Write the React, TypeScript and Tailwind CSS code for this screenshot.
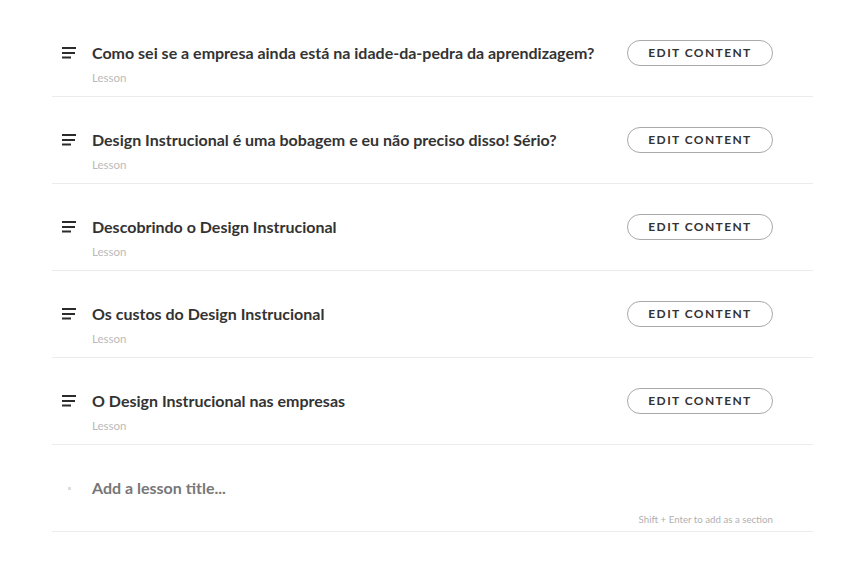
const lessons = [
  'Como sei se a empresa ainda está na idade-da-pedra da aprendizagem?',
  'Design Instrucional é uma bobagem e eu não preciso disso! Sério?',
  'Descobrindo o Design Instrucional',
  'Os custos do Design Instrucional',
  'O Design Instrucional nas empresas',
];

function DragIcon() {
  return (
    <svg width="16" height="12" viewBox="0 0 16 12" className="block">
      <rect x="0" y="0" width="14" height="2" fill="#2b2b2b" />
      <rect x="0" y="5" width="13" height="2" fill="#2b2b2b" />
      <rect x="0" y="9.5" width="9" height="2" fill="#2b2b2b" />
    </svg>
  );
}

function LessonRow({ title }: { title: string }) {
  return (
    <div className="flex border-b border-[#ececec] pt-[32px] pb-[10px] pr-[40px]">
      <div className="flex h-[22px] w-[40px] shrink-0 items-center pl-[10px]">
        <DragIcon />
      </div>
      <div className="flex-1">
        <div className="flex h-[22px] items-center justify-between">
          <h3 className="text-[16px] font-bold leading-[22px] text-[#333]">{title}</h3>
          <button className="flex h-[26px] w-[146px] shrink-0 items-center justify-center rounded-full border border-[#a9a9a9] bg-white text-[12px] font-bold tracking-[1.4px] text-[#333]">
            EDIT CONTENT
          </button>
        </div>
        <p className="mt-[6px] text-[11.5px] leading-[16px] text-[#bababa]">Lesson</p>
      </div>
    </div>
  );
}

export default function App() {
  return (
    <div className="min-h-screen bg-white font-['Lato','Liberation_Sans',sans-serif]">
      <div className="ml-[52px] w-[761px] pt-[10px]">
        {lessons.map((title) => (
          <LessonRow key={title} title={title} />
        ))}
        <div className="border-b border-[#ececec] pt-[32px] pb-[6px] pr-[40px]">
          <div className="flex h-[22px] items-center">
            <div className="flex w-[40px] shrink-0 items-center pl-[16px]">
              <span className="block h-[3px] w-[3px] bg-[#dcdcdc]" />
            </div>
            <span className="text-[16px] font-bold leading-[22px] text-[#777]">Add a lesson title...</span>
          </div>
          <p className="mt-[14px] text-right text-[9.7px] leading-[12px] text-[#b0b0b0]">
            Shift + Enter to add as a section
          </p>
        </div>
      </div>
    </div>
  );
}
